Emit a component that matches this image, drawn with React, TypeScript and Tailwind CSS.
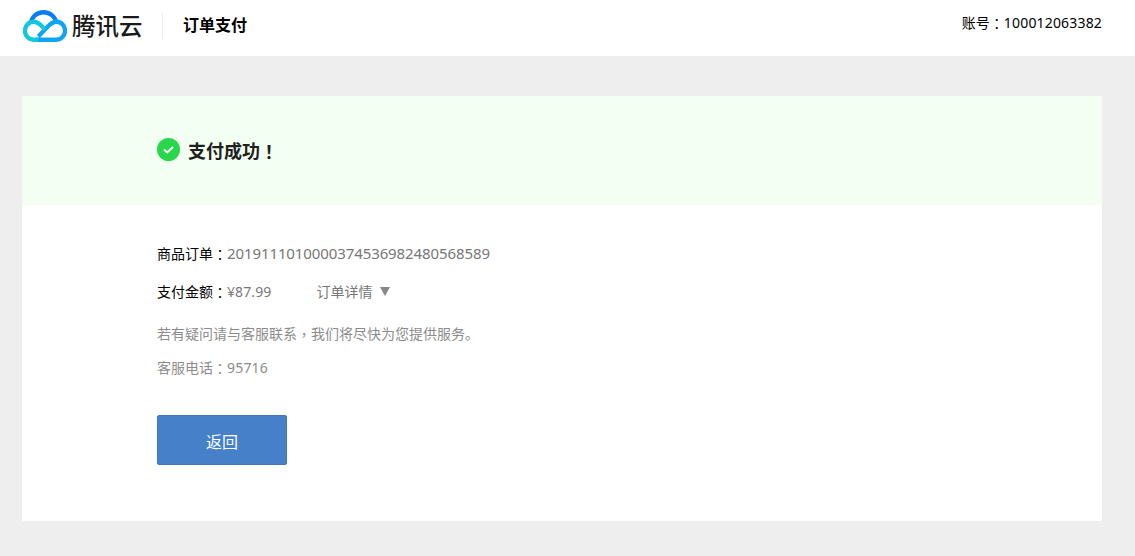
import React from 'react';

const cjk = "font-['Noto_Sans','Noto_Sans_CJK_SC',sans-serif]";

// full width punctuation sits centred in the TC cut, as in the screenshot
function Punct({ children }: { children: React.ReactNode }) {
  return <span className="relative top-px font-['Noto_Sans_CJK_TC',sans-serif]">{children}</span>;
}

function Logo() {
  return (
    <svg width="44" height="32" viewBox="0 0 46 32" preserveAspectRatio="none" fill="none" className="shrink-0">
      <path d="M8 13.500C9 7 14.500 2.200 21.500 2.200C28.500 2.200 34 7 35 13" stroke="#0a7cf5" strokeWidth="4.400" />
      <path d="M14 29.700H35A9 9 0 0 0 35 11.700C31 11.700 29 13.500 26 16.500L16 26.500" stroke="#0ea5f7" strokeWidth="4.400" />
      <path d="M16 29.700H11A9 9 0 0 1 11 11.700C15 11.700 17 13.500 19.500 16L23 19.500" stroke="#12c6dc" strokeWidth="4.400" />
    </svg>
  );
}

export default function App() {
  return (
    <div className={`min-h-[556px] bg-[#eeeeee] ${cjk}`}>
      <header className="h-14 bg-white flex justify-between pl-[23px] pr-[33px]">
        <div className="flex items-center pb-[4px] h-14">
          <Logo />
          <span className="ml-[5px] mt-[2px] text-[23.5px] font-medium text-[#1a1a1a] w-[72px] whitespace-nowrap leading-none">腾讯云</span>
          <span className="ml-[18px] w-px h-[26px] bg-[#eeeeee]" />
          <span className="ml-5 -mt-[2px] text-base font-bold text-black">订单支付</span>
        </div>
        <div className="pt-[12px] text-sm leading-5 text-black">
          账号<Punct>：</Punct><span className="tracking-[0.17px]">100012063382</span>
        </div>
      </header>

      <main className="ml-[22px] mt-10 w-[1080px] bg-white h-[425px]">
        <div className="h-[109px] bg-[#f3fff3] pl-[135px] flex items-center">
          <svg width="23" height="23" viewBox="0 0 23 23" className="shrink-0 -mt-[2px]">
            <circle cx="11.500" cy="11.500" r="11.500" fill="#29d84a" />
            <path d="M7 11.500l3.200 3 5.800-5.500" fill="none" stroke="#fff" strokeWidth="2" />
          </svg>
          <span className="ml-2 text-lg font-bold text-[#1f1f1f]">支付成功<Punct>！</Punct></span>
        </div>

        <div className="pl-[135px] pt-[38px] text-sm">
          <div className="h-5 leading-5 text-[#777777] flex items-baseline">
            <span className="text-black">商品订单<Punct>：</Punct></span>
            <span className="text-[15px] tracking-[-0.1px]">2019111010000374536982480568589</span>
          </div>
          <div className="mt-[18px] h-5 leading-5 text-[#777777] flex items-baseline">
            <span className="text-black">支付金额<Punct>：</Punct></span>
            <span className="tracking-[0.1px]">¥87.99</span>
            <span className="ml-[45px]">订单详情</span>
            <span className="ml-[8px] mt-px self-center w-0 h-0 border-x-[5.500px] border-t-[9px] border-x-transparent border-t-[#888888]" />
          </div>
          <p className="mt-[22px] h-5 leading-5 text-[#8c8c8c]">若有疑问请与客服联系<Punct>，</Punct>我们将尽快为您提供服务。</p>
          <p className="mt-[14px] h-5 leading-5 text-[#8c8c8c]">客服电话<Punct>：</Punct><span className="tracking-[0.2px]">95716</span></p>
          <button className="mt-[38px] w-[130px] h-[50px] pt-[3px] rounded-[2px] bg-[#4680c9] border border-[#3f76bd] text-white text-base">返回</button>
        </div>
      </main>
    </div>
  );
}
